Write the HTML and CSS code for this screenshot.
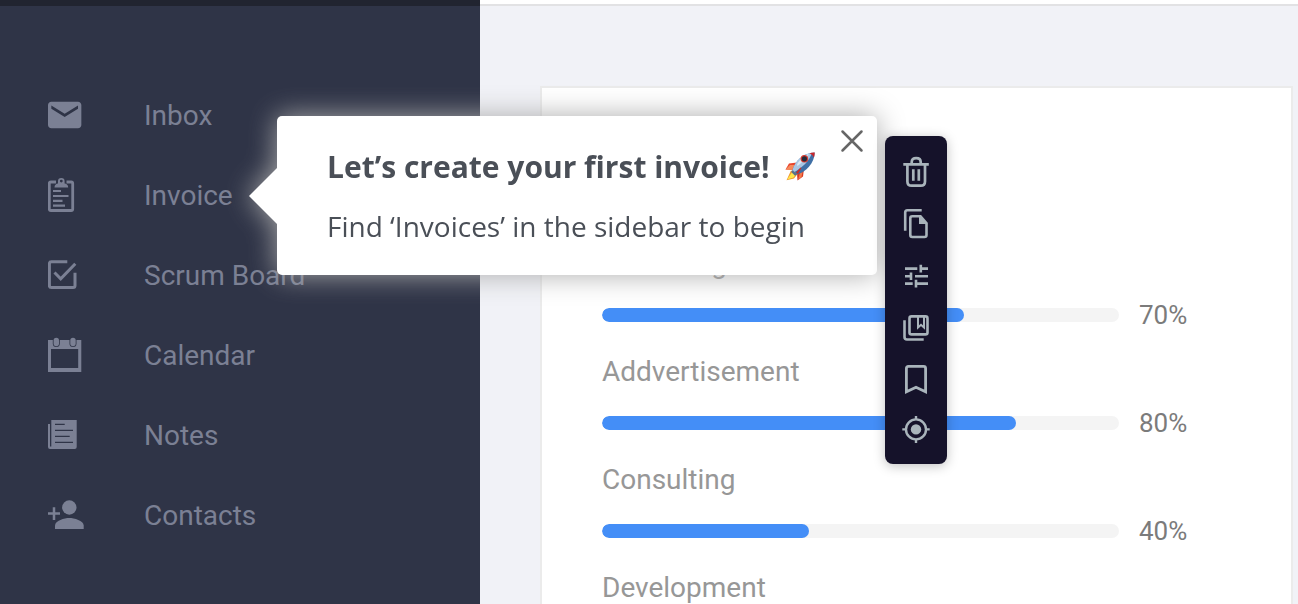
FILE: index.html
```
<!DOCTYPE html>
<html lang="en">
<head>
    <meta charset="UTF-8">
    <meta name="viewport" content="width=device-width, initial-scale=1.0">
    <title>Dashboard</title>
    <link rel="stylesheet" href="styles.css">
</head>
<body>

    <div class="page">
        <nav class="sidebar">
            <a class="nav-item" href="#inbox">
                <svg class="nav-icon" viewBox="0 0 40 40"><path transform="translate(-3.33 0) scale(1.667)" fill="currentColor" d="M20 4H4c-1.1 0-2 .9-2 2v12c0 1.1.9 2 2 2h16c1.1 0 2-.9 2-2V6c0-1.1-.9-2-2-2zm0 4.200l-8 5-8-5V6.300l8 5 8-5z"/></svg>
                <span>Inbox</span>
            </a>
            <a class="nav-item" href="#invoice">
                <svg class="nav-icon" viewBox="0 0 40 40">
                    <path class="line" stroke-width="2.800" d="M8 7H2.800Q1.300 7 1.300 8.500V34q0 1.500 1.500 1.500H23.200q1.500 0 1.500-1.500V8.500Q24.700 7 23.200 7H18.500"/>
                    <path fill="currentColor" fill-rule="evenodd" d="M6.500 12.500c0-2.500 1.500-3.800 3.500-4V6.300a3.300 3.300 0 0 1 6.600 0v2.200c2 .2 3.600 1.500 3.600 4zM13.300 4.700a1.400 1.400 0 1 0 0 2.800 1.400 1.400 0 0 0 0-2.800z"/>
                    <path class="line" stroke-width="2.200" d="M5 16h8M5 21h15.500M5 25.800h9.500M5 30.600h12"/>
                </svg>
                <span>Invoice</span>
            </a>
            <a class="nav-item" href="#scrum">
                <svg class="nav-icon" viewBox="0 0 40 40">
                    <path class="line" stroke-width="3" d="M19.300 6.800H3.400Q1.400 6.800 1.400 8.800V30.600q0 2 2 2H25q2 0 2-2V17.700"/>
                    <path class="line" stroke-width="3" d="M6.500 17.500l6.200 6.300L27.300 8.800"/>
                </svg>
                <span>Scrum Board</span>
            </a>
            <a class="nav-item" href="#calendar">
                <svg class="nav-icon" viewBox="0 0 40 40">
                    <path fill="currentColor" fill-rule="evenodd" d="M0 5h33.300v32H0zM3 14v19h27.200V14z"/>
                    <g class="pins"><rect x="4.800" y="2" width="7" height="10" rx="3.500"/><rect x="21.500" y="2" width="7" height="10" rx="3.500"/></g>
                    <g fill="currentColor"><rect x="5.600" y="2.800" width="5.400" height="8.400" rx="2.700"/><rect x="22.300" y="2.800" width="5.400" height="8.400" rx="2.700"/></g>
                </svg>
                <span>Calendar</span>
            </a>
            <a class="nav-item" href="#notes">
                <svg class="nav-icon" viewBox="0 0 40 40">
                    <path fill="currentColor" d="M3.300 5h25.400v27q0 2-2 2H2q-2 0-2-2V9h2v22.500h1.300z"/>
                    <path class="cut" d="M7 9.400h9.700M7 15.400h18M7 21.400h14.700M7 27.400h18"/>
                </svg>
                <span>Notes</span>
            </a>
            <a class="nav-item" href="#contacts">
                <svg class="nav-icon" viewBox="0 0 40 40">
                    <path class="line" stroke-width="2.500" d="M0 18.600h12M6 12.300v12.600"/>
                    <circle cx="21.300" cy="12.500" r="7.200" fill="currentColor"/>
                    <path fill="currentColor" d="M7 34v-3.600c0-4.800 9.600-7.400 14.300-7.400s14.400 2.600 14.400 7.400V34z"/>
                </svg>
                <span>Contacts</span>
            </a>
        </nav>

        <main class="content">
            <section class="card">
                <div class="skill">
                    <div class="skill-name" id="marketing">Marketing</div>
                    <div class="skill-row">
                        <div class="track" role="progressbar" aria-labelledby="marketing" aria-valuenow="70"><div class="fill" style="width: 70%"></div></div>
                        <span class="percent">70%</span>
                    </div>
                </div>
                <div class="skill">
                    <div class="skill-name" id="advert">Addvertisement</div>
                    <div class="skill-row">
                        <div class="track" role="progressbar" aria-labelledby="advert" aria-valuenow="80"><div class="fill" style="width: 80%"></div></div>
                        <span class="percent">80%</span>
                    </div>
                </div>
                <div class="skill">
                    <div class="skill-name" id="consulting">Consulting</div>
                    <div class="skill-row">
                        <div class="track" role="progressbar" aria-labelledby="consulting" aria-valuenow="40"><div class="fill" style="width: 40%"></div></div>
                        <span class="percent">40%</span>
                    </div>
                </div>
                <div class="skill">
                    <div class="skill-name">Development</div>
                </div>
            </section>
        </main>
    </div>

    <!-- onboarding tooltip -->
    <div class="tooltip" role="dialog" aria-labelledby="tipTitle">
        <button class="close" type="button" aria-label="Close">
            <svg viewBox="0 0 24 24"><path d="M2.500 2.500l19 19M21.500 2.500l-19 19"/></svg>
        </button>
        <h2 class="tooltip-title" id="tipTitle">
            Let’s create your first invoice!
            <svg class="rocket" viewBox="0 0 30 30" aria-hidden="true">
                <path fill="#e8452c" d="M.5 17.500L4 11.500l8-1-4.500 7.500z"/>
                <path fill="#f58a5c" d="M.5 17.500L5 13l5 0-3 5z"/>
                <path fill="#d93a22" d="M19 16.500l-1 8-5.500 4-.5-7z"/>
                <path fill="#f47b4b" d="M15 21l2.500-1-1 5-3.500 3z"/>
                <path fill="#f2992e" d="M6 18.500l-4.500 9.700L9 26.500l4-5z"/>
                <path fill="#ffe84a" d="M6.500 21l-4.300 6.500 6.300-2 2.500-3.500z"/>
                <path fill="#3f6fa5" d="M7.500 18C10 9 18 1 29.700.4 29.500 11 21 20 12 22.500z"/>
                <path fill="#a9c6e3" d="M7.500 18C10 9 17 2 27 .7 25 8 17 16 9.500 20z"/>
                <path fill="#dbe8f3" d="M12 12.500C15 7 20 3 24 2c-3 3-7 9-11.500 12z"/>
                <path fill="#c8262a" d="M24.500 1.200Q27 .3 29.700.4q0 2.600-.8 5Q27.800 2.500 24.500 1.200z"/>
                <path fill="#55718f" d="M7.500 18l4.500 4.500-2 1.300L6.300 20z"/>
                <circle cx="19.400" cy="6.800" r="3.800" fill="#d3392e"/>
                <circle cx="19.400" cy="6.800" r="2.600" fill="#232a3b"/>
                <path fill="#c7302a" d="M11 20.500l4.500-5 1 .5-3.500 6z"/>
            </svg>
        </h2>
        <p class="tooltip-text">Find ‘Invoices’ in the sidebar to begin</p>
    </div>

    <div class="toolbar" role="toolbar">
        <button class="tool" type="button" aria-label="Delete">
            <svg viewBox="0 0 32 32"><path stroke-width="2.700" d="M3.300 8.400h25.500M7.400 8.400v17q0 4.300 4.300 4.300h9q4.300 0 4.300-4.300v-17M11.700 8V6q0-3.800 4.500-3.800T20.700 6v2M13.300 13.300v11.500M18.800 13.300v11.500"/></svg>
        </button>
        <button class="tool" type="button" aria-label="Duplicate">
            <svg viewBox="0 0 32 32"><path stroke-width="2.600" d="M5.200 22.700V4.500q0-2.200 2.200-2.200h14.300M12.300 8.200h8.200l6 7V27q0 2-2 2H12.300q-2 0-2-2V10.200q0-2 2-2z"/><path class="solid" d="M19 7.500v8.500h8.500z"/></svg>
        </button>
        <button class="tool" type="button" aria-label="Settings">
            <svg viewBox="0 0 32 32"><path stroke-width="2.600" d="M5 8.600h12.300M20.800 8.600H28M20.800 4.700v7.800M5 16.200h6M11 12.400v7.700M15 16.200h13M5 23.600h7.700M16 23.600h12M16 19.700v7.700"/></svg>
        </button>
        <button class="tool" type="button" aria-label="Collections">
            <svg viewBox="0 0 32 32"><path stroke-width="2.600" d="M4.500 8.300V25q0 2.500 2.500 2.500h16.700M11.500 4.400h14q2 0 2 2v14q0 2-2 2h-14q-2 0-2-2v-14q0-2 2-2z"/><path stroke-width="2" d="M18 4.500v11l3-2.700 3 2.700v-11"/></svg>
        </button>
        <button class="tool" type="button" aria-label="Bookmark">
            <svg viewBox="0 0 32 32"><path stroke-width="2.800" d="M8.400 2.400h15.200q2 0 2 2v23.400L16 23.200l-9.600 4.600V4.400q0-2 2-2z"/></svg>
        </button>
        <button class="tool" type="button" aria-label="Target">
            <svg viewBox="0 0 32 32"><path stroke-width="2.400" d="M16 0v4M16 23v4M2.300 13.400h4M25.700 13.400h4"/><circle cx="16" cy="13.400" r="10" stroke-width="2.400"/><circle class="solid" cx="16" cy="13.400" r="5.200"/></svg>
        </button>
    </div>

</body>
</html>
```

FILE: styles.css
```
* {
    box-sizing: border-box;
}

body {
    font-family: Roboto, Arial, sans-serif;
    font-size: 28px;
    margin: 0;
    position: relative;
    background-color: #f1f2f7;
}

.page {
    display: flex;
    min-height: 100vh;
}

.sidebar {
    flex: 0 0 480px;
    padding: 69px 48px 0;
    border-top: 6px solid #212430;
    background-color: #2f3447;
}

.nav-item {
    display: flex;
    align-items: center;
    gap: 56px;
    height: 80px;
    color: #7b8094;
    text-decoration: none;
}

.nav-icon {
    flex: none;
    width: 40px;
    height: 40px;
}

.nav-icon .line {
    fill: none;
    stroke: currentColor;
}

.nav-icon .pins {
    fill: #2f3447;
}

.nav-icon .cut {
    stroke: #2f3447;
    stroke-width: 1.3;
}

.content {
    flex: 1;
    display: flex;
    padding: 82px 5px 0 60px;
    border-top: 4px solid #fff;
    box-shadow: inset 0 2px 0 #e2e2e4;
}

.card {
    flex: 1;
    padding: 160px 60px 0;
    border: 2px solid #ebebeb;
    border-bottom: none;
    background-color: #fff;
}

.skill {
    margin-bottom: 26px;
}

.skill:last-child {
    margin-bottom: 0;
}

.skill-name {
    line-height: 32px;
    color: #979797;
}

.skill-row {
    display: flex;
    align-items: center;
    gap: 20px;
    margin-top: 20px;
}

.track {
    flex: 1;
    height: 14px;
    border-radius: 7px;
    background-color: #f4f4f4;
    overflow: hidden;
}

.fill {
    height: 100%;
    border-radius: 7px;
    background-color: #448ef7;
}

.percent {
    flex: 0 0 92px;
    font-size: 26px;
    line-height: 30px;
    color: #7b7b7b;
}

/* tooltip */
.tooltip {
    position: absolute;
    top: 116px;
    left: 277px;
    width: 600px;
    padding: 31px 50px 29px;
    border-radius: 5px;
    background-color: #fff;
    color: #4a4f57;
    font-family: "Open Sans", sans-serif;
    filter: drop-shadow(0 0 14px #aaa);
}

.tooltip::before {
    content: "";
    position: absolute;
    top: 52px;
    left: -28px;
    border: 28px solid transparent;
    border-right-color: #fff;
    border-left: none;
}

.tooltip-title {
    display: flex;
    align-items: center;
    gap: 14px;
    margin: 0 0 19px;
    font-size: 30px;
    font-weight: bold;
    line-height: 40px;
}

.rocket {
    width: 32px;
    height: 30px;
}

.tooltip-text {
    margin: 0;
    font-size: 28px;
    line-height: 40px;
}

.close {
    position: absolute;
    top: 13px;
    right: 13px;
    width: 24px;
    height: 24px;
    padding: 0;
    border: none;
    background: none;
    cursor: pointer;
}

.close svg {
    display: block;
    stroke: #666;
    stroke-width: 2.5;
    stroke-linecap: round;
}

/* floating tools */
.toolbar {
    position: absolute;
    top: 136px;
    left: 885px;
    width: 62px;
    padding: 10px 0 6px;
    border-radius: 8px;
    background-color: #15122a;
    box-shadow: 0 2px 12px rgba(0, 0, 0, 0.25);
}

.tool {
    display: flex;
    align-items: center;
    justify-content: center;
    width: 100%;
    height: 52px;
    padding: 0;
    border: none;
    background: none;
    color: #a9b4bb;
    cursor: pointer;
}

.tool svg {
    width: 32px;
    height: 32px;
    fill: none;
    stroke: currentColor;
}

.tool .solid {
    fill: currentColor;
    stroke: none;
}
```
